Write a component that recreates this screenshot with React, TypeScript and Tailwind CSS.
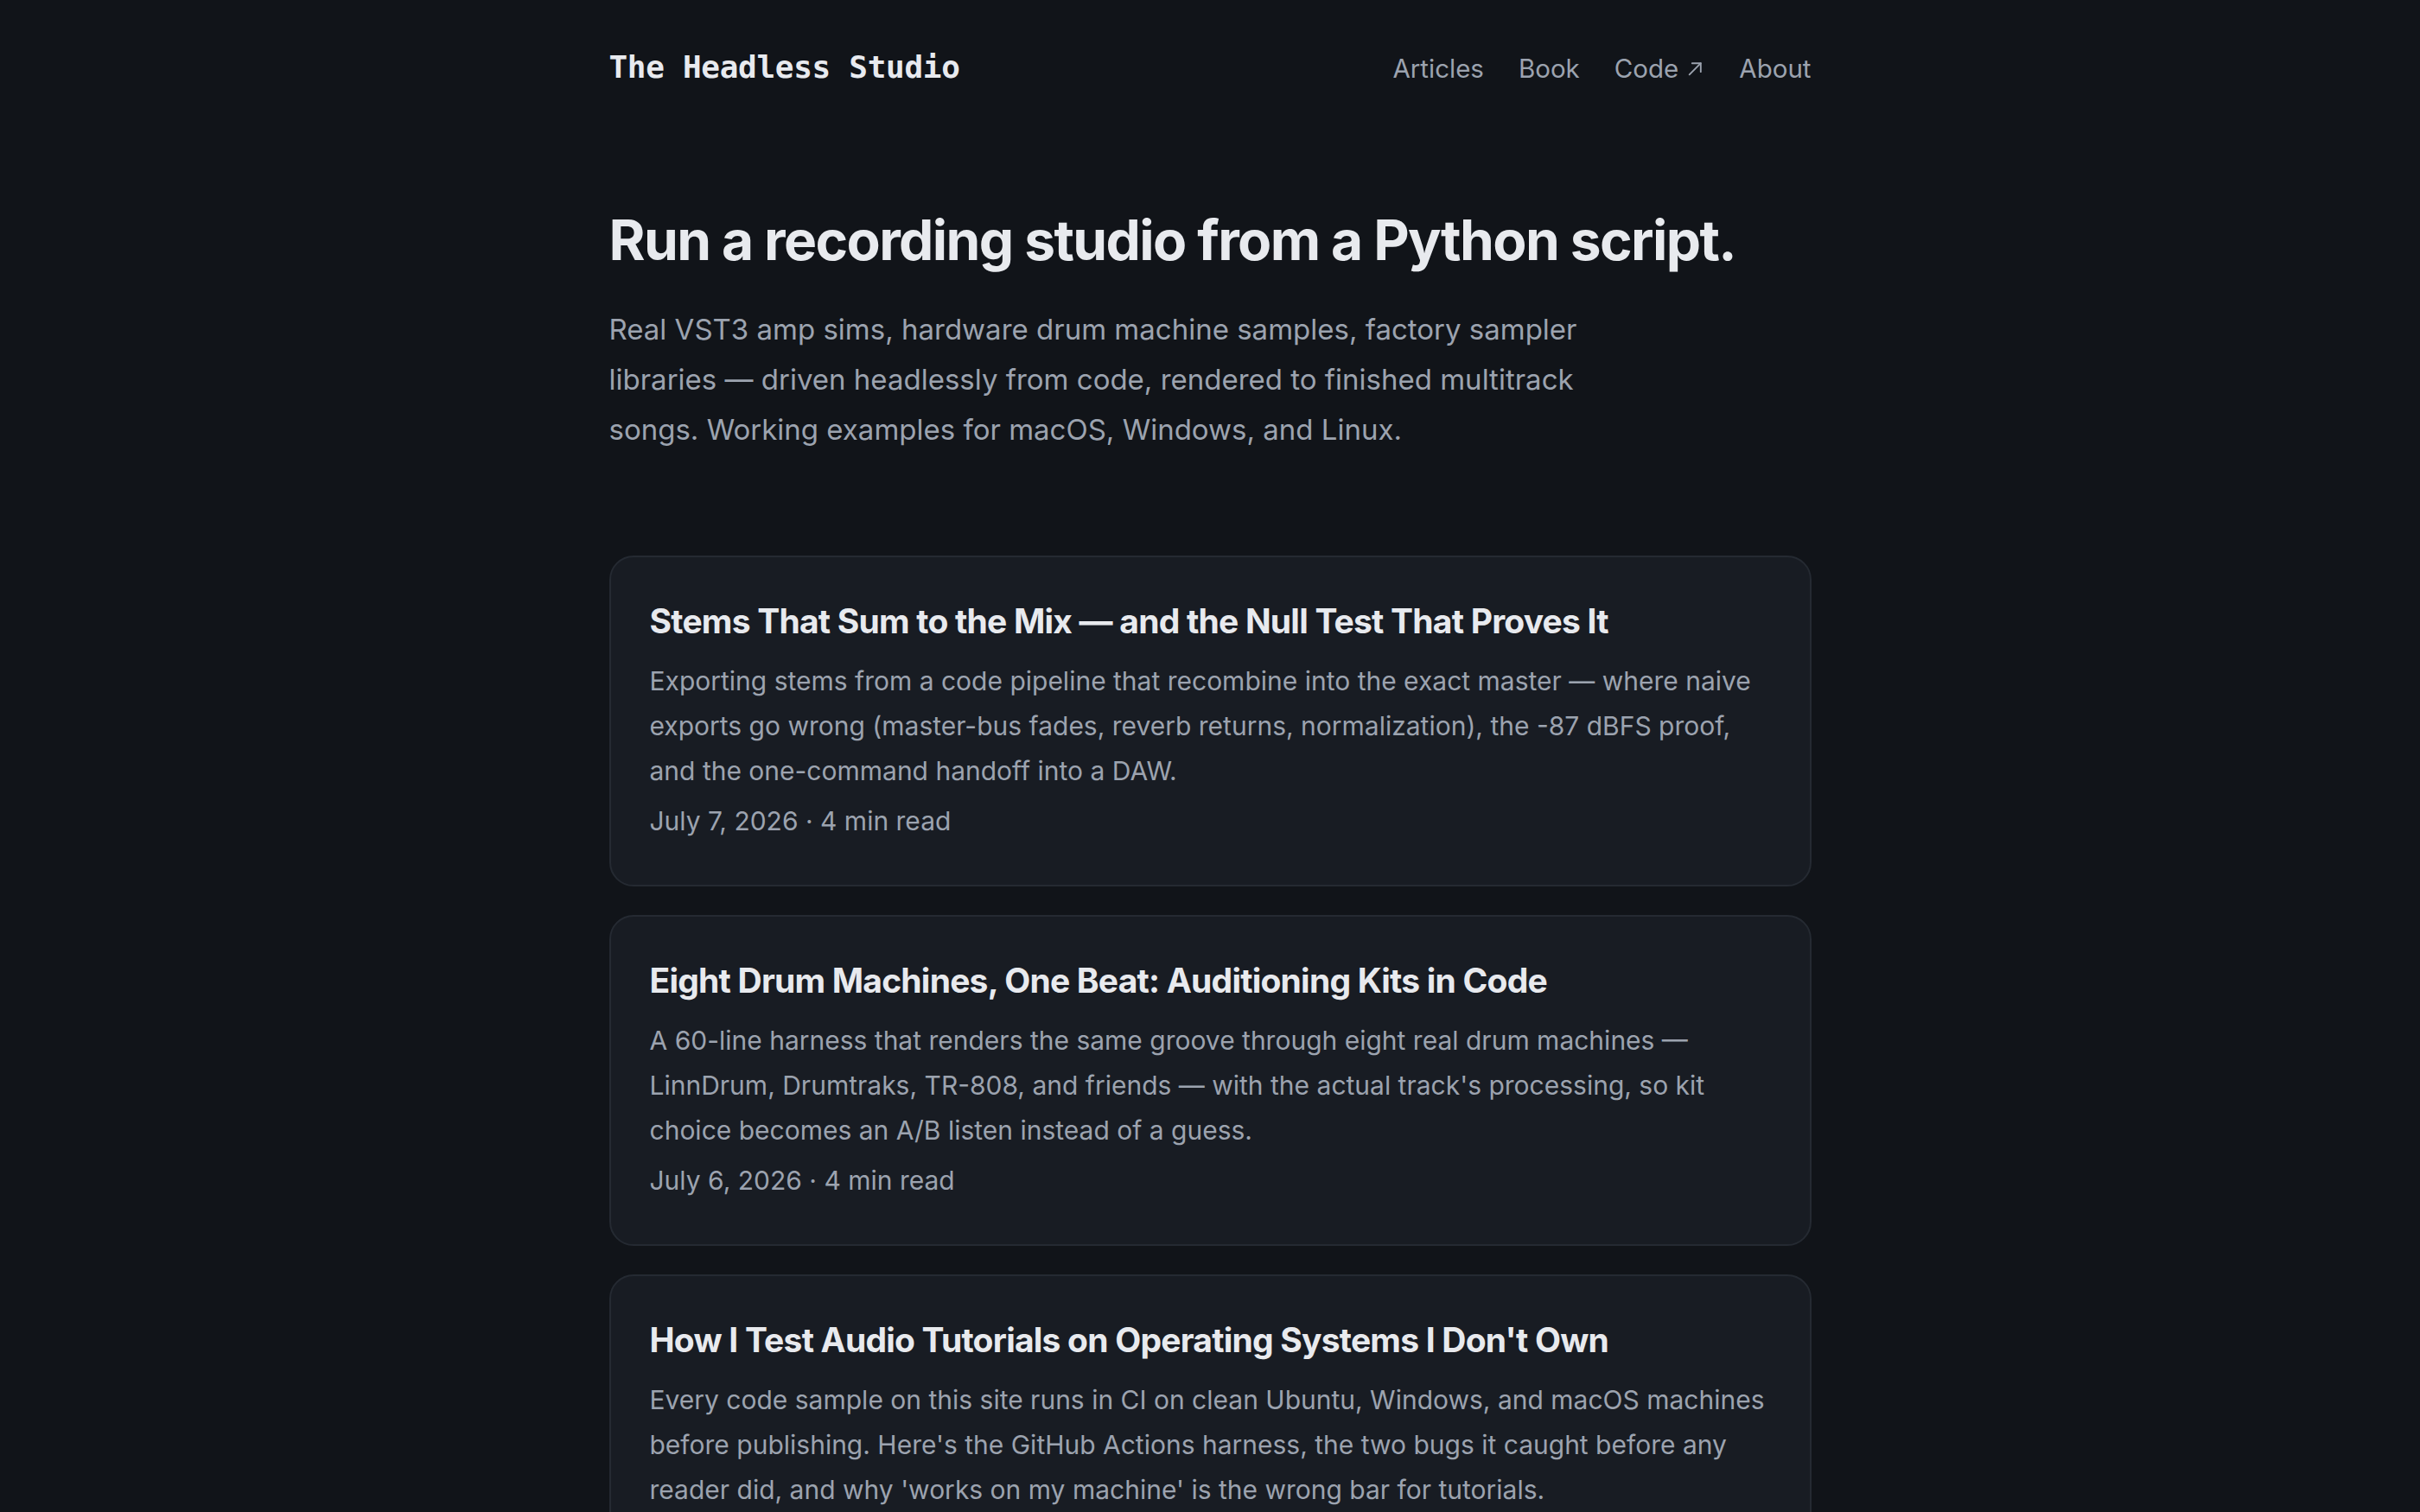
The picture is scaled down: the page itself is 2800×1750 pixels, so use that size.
const posts = [
  {
    title: "Stems That Sum to the Mix — and the Null Test That Proves It",
    excerpt:
      "Exporting stems from a code pipeline that recombine into the exact master — where naive exports go wrong (master-bus fades, reverb returns, normalization), the -87 dBFS proof, and the one-command handoff into a DAW.",
    date: "July 7, 2026",
    read: "4 min read",
  },
  {
    title: "Eight Drum Machines, One Beat: Auditioning Kits in Code",
    excerpt:
      "A 60-line harness that renders the same groove through eight real drum machines — LinnDrum, Drumtraks, TR-808, and friends — with the actual track's processing, so kit choice becomes an A/B listen instead of a guess.",
    date: "July 6, 2026",
    read: "4 min read",
  },
  {
    title: "How I Test Audio Tutorials on Operating Systems I Don't Own",
    excerpt:
      "Every code sample on this site runs in CI on clean Ubuntu, Windows, and macOS machines before publishing. Here's the GitHub Actions harness, the two bugs it caught before any reader did, and why 'works on my machine' is the wrong bar for tutorials.",
    date: "July 5, 2026",
    read: "6 min read",
  },
];

function ArrowUpRight() {
  return (
    <svg viewBox="0 0 20 20" className="w-[21px] h-[21px] ml-[9px]" fill="none" stroke="currentColor" strokeWidth="1.8" strokeLinecap="round" strokeLinejoin="round">
      <path d="M3.5 16.5 L16 4" />
      <path d="M6.5 4 H16 V13.5" />
    </svg>
  );
}

export default function App() {
  return (
    <div className="min-h-screen bg-[#111419] font-['Inter','Noto_Sans',sans-serif] text-[#e6e8ec]">
      <div className="mx-auto w-[1391px]">
        {/* Header */}
        <header className="flex items-baseline justify-between pt-[55px] leading-[45px]">
          <a className="font-['DejaVu_Sans_Mono',monospace] text-[36px] font-bold text-[#e8eaef] tracking-[-0.3px]">
            The Headless Studio
          </a>
          <nav className="flex items-baseline gap-[40px] text-[29.5px] text-[#9ca3af]">
            <a>Articles</a>
            <a>Book</a>
            <a className="flex items-center">
              Code
              <ArrowUpRight />
            </a>
            <a>About</a>
          </nav>
        </header>

        {/* Hero */}
        <section className="mt-[137px]">
          <h1 className="text-[64px] font-bold leading-[77px] tracking-[-0.025em] text-[#e8eaee]">
            Run a recording studio from a Python script.
          </h1>
          <p className="mt-[36px] max-w-[1150px] text-[33px] leading-[58px] text-[#9ca3af]">
            Real VST3 amp sims, hardware drum machine samples, factory sampler libraries — driven
            headlessly from code, rendered to finished multitrack songs. Working examples for macOS,
            Windows, and Linux.
          </p>
        </section>

        {/* Post list */}
        <section className="mt-[117px] flex flex-col gap-[33px] pb-[60px]">
          {posts.map((p) => (
            <article
              key={p.title}
              className="rounded-[28px] border-2 border-[#252a32] bg-[#181c23] px-[45px] pt-[49px] pb-[48px]"
            >
              <h2 className="text-[39px] font-bold leading-[50px] tracking-[-0.02em] text-[#e8eaee]">
                {p.title}
              </h2>
              <p className="mt-[18px] text-[30px] leading-[52px] text-[#9ca3af]">{p.excerpt}</p>
              <p className="mt-[6px] text-[30px] leading-[52px] text-[#9ca3af]">
                {p.date} · {p.read}
              </p>
            </article>
          ))}
        </section>
      </div>
    </div>
  );
}
